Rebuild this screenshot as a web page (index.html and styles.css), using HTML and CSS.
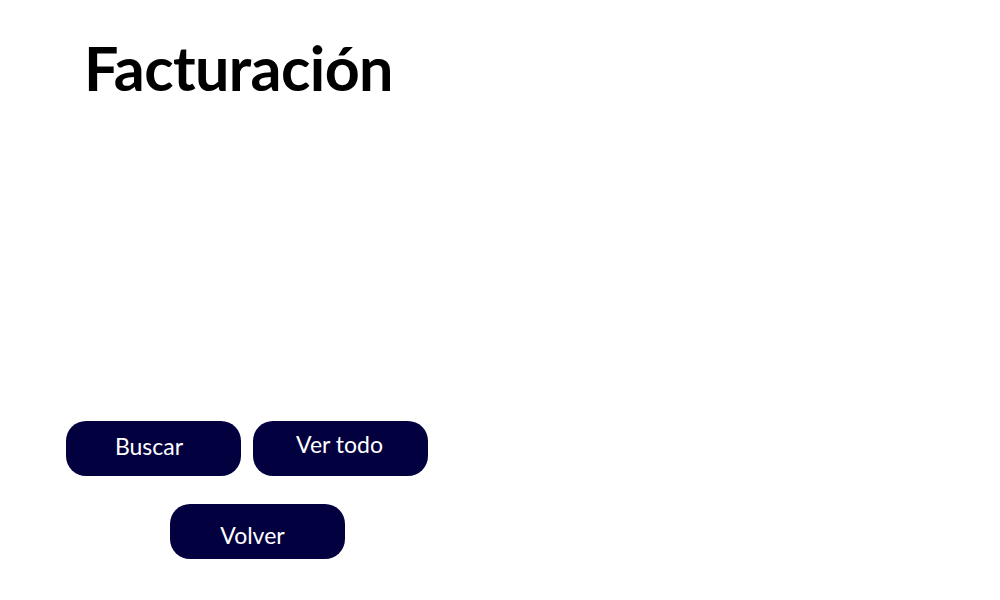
FILE: index.html
```html
<!DOCTYPE html>
<html lang="es">
<head>
<meta charset="utf-8">
<title>Facturación</title>
<link rel="stylesheet" href="styles.css">
</head>
<body>
<main class="page">
  <h1 class="title">Facturación</h1>
  <div class="actions">
    <div class="row">
      <button class="btn btn-search">Buscar</button>
      <button class="btn btn-all">Ver todo</button>
    </div>
    <div class="row row-back">
      <button class="btn btn-back">Volver</button>
    </div>
  </div>
</main>
</body>
</html>
```

FILE: styles.css
```css
html, body {
  margin: 0;
  padding: 0;
  background: #ffffff;
}
body {
  font-family: "Lato", "Noto Sans", sans-serif;
  color: #000;
  width: 1000px;
  height: 600px;
  overflow: hidden;
}
.page {
  display: flex;
  flex-direction: column;
}
.title {
  margin: 33px 0 0 84px;
  font-size: 61px;
  font-weight: 700;
  line-height: 70px;
  letter-spacing: -0.6px;
}
.actions {
  margin: 318px 0 0 66px;
  display: flex;
  flex-direction: column;
  gap: 28px;
}
.row {
  display: flex;
  gap: 12px;
}
.row-back {
  padding-left: 104px;
}
.btn {
  width: 175px;
  height: 55px;
  border: none;
  border-radius: 20px;
  background: #03003f;
  color: #ffffff;
  font-family: "Lato", "Noto Sans", sans-serif;
  font-size: 23px;
  padding: 0;
  cursor: pointer;
}
.btn-search { padding-bottom: 6px; padding-right: 9px; }
.btn-all { padding-bottom: 10px; padding-right: 2px; }
.btn-back { padding-top: 6px; padding-right: 10px; }
```
